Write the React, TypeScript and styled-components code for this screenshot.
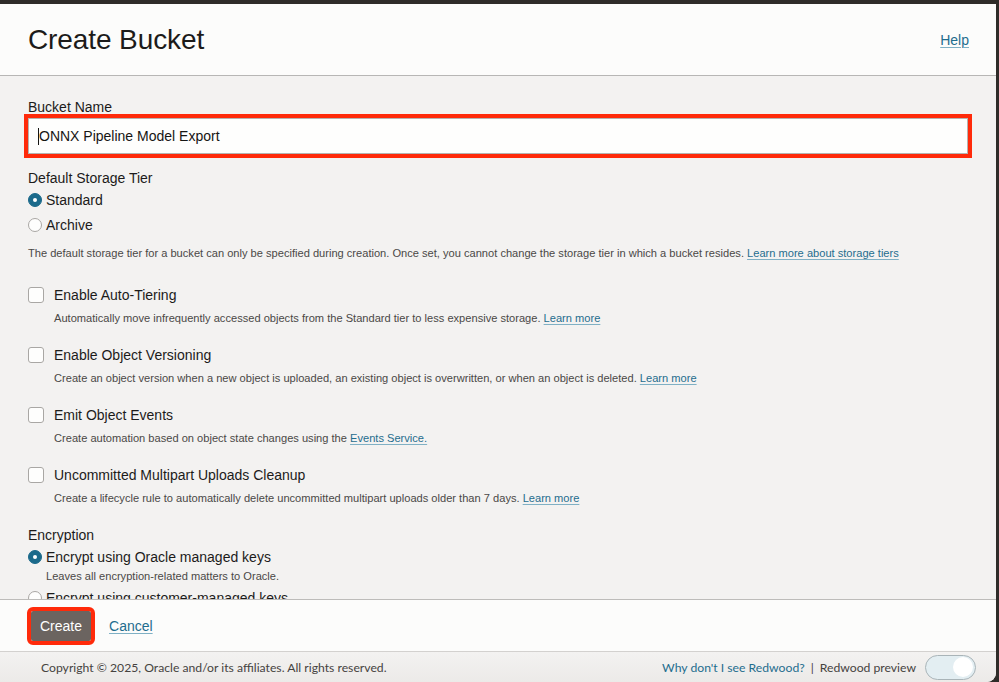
import React from "react";
import styled, { createGlobalStyle } from "styled-components";

const Global = createGlobalStyle`
  html, body { margin: 0; padding: 0; background: #2f2c29; }
  body { font-family: "Liberation Sans", Arial, Helvetica, sans-serif; color: #161513; }
  * { box-sizing: border-box; }
`;

const Screen = styled.div`
  width: 999px;
  height: 682px;
  background: #2f2c29;
  padding-top: 4px;
  overflow: hidden;
`;

const Panel = styled.div`
  width: 996px;
  height: 678px;
  display: flex;
  flex-direction: column;
  background: #f3f2f1;
  border-bottom-right-radius: 9px;
  overflow: hidden;
`;

const Header = styled.header`
  height: 72px;
  flex: none;
  background: #fcfcfb;
  border-bottom: 1px solid #b7b6b5;
  display: flex;
  align-items: center;
  justify-content: space-between;
  padding: 0 27px 0 28px;
`;

const Title = styled.h1`
  margin: 0;
  font-size: 28px;
  font-weight: 400;
  color: #1c1b1a;
  letter-spacing: -0.1px;
`;

const Link = styled.a<{ $size?: number }>`
  color: #1f6d8e;
  font-size: ${(p) => p.$size ?? 11.1}px;
  text-decoration: underline;
  text-decoration-color: #7fb0c4;
  text-underline-offset: 2px;
  text-decoration-thickness: 1px;
  cursor: pointer;
`;

const Body = styled.main`
  flex: 1;
  overflow: hidden;
  padding: 23px 28px 0 28px;
`;

const FieldLabel = styled.div<{ $mt?: number }>`
  font-size: 14px;
  line-height: 17px;
  color: #1c1b1a;
  margin-top: ${(p) => p.$mt ?? 0}px;
`;

const InputBox = styled.div`
  margin-top: 2px;
  height: 36px;
  background: #fefefd;
  border: 1px solid #b5b3b0;
  outline: 4px solid #ff2a0a;
  display: flex;
  align-items: center;
  padding-left: 9px;
  font-size: 14px;
  color: #161513;
`;

const Caret = styled.span`
  display: inline-block;
  width: 1px;
  height: 17px;
  background: #161513;
`;

const RadioRow = styled.label<{ $mt?: number }>`
  display: flex;
  align-items: center;
  gap: 4px;
  height: 17px;
  font-size: 14px;
  color: #1c1b1a;
  margin-top: ${(p) => p.$mt ?? 0}px;
`;

const RadioDot = styled.span<{ $on?: boolean }>`
  width: 14px;
  height: 14px;
  border-radius: 50%;
  flex: none;
  background: ${(p) => (p.$on ? "#1b6a8b" : "#fefefd")};
  border: 1px solid ${(p) => (p.$on ? "#1b6a8b" : "#a9a7a4")};
  display: flex;
  align-items: center;
  justify-content: center;
  &::after {
    content: "";
    display: ${(p) => (p.$on ? "block" : "none")};
    width: 4px;
    height: 4px;
    border-radius: 50%;
    background: #fff;
  }
`;

const Help = styled.p<{ $mt?: number; $ml?: number }>`
  margin: ${(p) => p.$mt ?? 0}px 0 0 ${(p) => p.$ml ?? 0}px;
  font-size: 11.1px;
  line-height: 14px;
  color: #4a4846;
`;

const CheckGroup = styled.div<{ $mt?: number }>`
  margin-top: ${(p) => p.$mt ?? 0}px;
`;

const CheckRow = styled.label`
  display: flex;
  align-items: center;
  gap: 10px;
  height: 17px;
  font-size: 14px;
  color: #1c1b1a;
`;

const CheckBox = styled.span`
  width: 16px;
  height: 16px;
  flex: none;
  border-radius: 3px;
  border: 1px solid #a9a7a4;
  background: #fefefd;
`;

const Footer = styled.div`
  height: 52px;
  flex: none;
  background: #fcfcfb;
  border-top: 1px solid #bdbcba;
  display: flex;
  align-items: center;
  gap: 18px;
  padding-left: 31px;
`;

const PrimaryButton = styled.button`
  height: 30px;
  padding: 0 9px;
  background: #6b6460;
  color: #ffffff;
  border: none;
  border-radius: 2px;
  font-family: inherit;
  font-size: 14px;
  outline: 4px solid #ff2a0a;
`;

const BottomBar = styled.footer`
  height: 31px;
  flex: none;
  background: linear-gradient(#f3f2f1, #eceae8);
  border-top: 1px solid #d3d1cf;
  display: flex;
  align-items: center;
  justify-content: space-between;
  padding: 0 20px 0 41px;
  font-family: Lato, "Noto Sans", sans-serif;
  font-size: 12.2px;
  color: #46433f;
`;

const BarRight = styled.div`
  display: flex;
  align-items: center;
  gap: 6px;
`;

const BarLink = styled.span`
  color: #1f6d8e;
`;

const Toggle = styled.span`
  position: relative;
  width: 51px;
  height: 25px;
  margin-left: 3px;
  border-radius: 13px;
  background: #e3eef2;
  border: 1px solid #a9b4b8;
  &::after {
    content: "";
    position: absolute;
    right: 2px;
    top: 1.5px;
    width: 20px;
    height: 20px;
    border-radius: 50%;
    background: #ffffff;
  }
`;

const checks = [
  {
    title: "Enable Auto-Tiering",
    desc: "Automatically move infrequently accessed objects from the Standard tier to less expensive storage. ",
    link: "Learn more",
  },
  {
    title: "Enable Object Versioning",
    desc: "Create an object version when a new object is uploaded, an existing object is overwritten, or when an object is deleted. ",
    link: "Learn more",
  },
  {
    title: "Emit Object Events",
    desc: "Create automation based on object state changes using the ",
    link: "Events Service.",
  },
  {
    title: "Uncommitted Multipart Uploads Cleanup",
    desc: "Create a lifecycle rule to automatically delete uncommitted multipart uploads older than 7 days. ",
    link: "Learn more",
  },
];

export default function App() {
  return (
    <>
      <Global />
      <Screen>
        <Panel>
          <Header>
            <Title>Create Bucket</Title>
            <Link $size={14}>Help</Link>
          </Header>
          <Body>
            <FieldLabel>Bucket Name</FieldLabel>
            <InputBox>
              <Caret />
              ONNX Pipeline Model Export
            </InputBox>
            <FieldLabel $mt={16}>Default Storage Tier</FieldLabel>
            <RadioRow $mt={4}>
              <RadioDot $on />
              Standard
            </RadioRow>
            <RadioRow $mt={8}>
              <RadioDot />
              Archive
            </RadioRow>
            <Help $mt={13}>
              The default storage tier for a bucket can only be specified during creation. Once set, you cannot change the storage tier in which a bucket resides.{" "}
              <Link>Learn more about storage tiers</Link>
            </Help>
            {checks.map((c, i) => (
              <CheckGroup key={c.title} $mt={i === 0 ? 26 : 21}>
                <CheckRow>
                  <CheckBox />
                  {c.title}
                </CheckRow>
                <Help $mt={8} $ml={26}>
                  {c.desc}
                  <Link>{c.link}</Link>
                </Help>
              </CheckGroup>
            ))}
            <FieldLabel $mt={22}>Encryption</FieldLabel>
            <RadioRow $mt={4}>
              <RadioDot $on />
              Encrypt using Oracle managed keys
            </RadioRow>
            <Help $mt={4} $ml={18}>
              Leaves all encryption-related matters to Oracle.
            </Help>
            <RadioRow $mt={6}>
              <RadioDot />
              Encrypt using customer-managed keys
            </RadioRow>
          </Body>
          <Footer>
            <PrimaryButton>Create</PrimaryButton>
            <Link $size={14}>Cancel</Link>
          </Footer>
          <BottomBar>
            <span>Copyright © 2025, Oracle and/or its affiliates. All rights reserved.</span>
            <BarRight>
              <BarLink>Why don't I see Redwood?</BarLink>
              <span>|</span>
              <span>Redwood preview</span>
              <Toggle />
            </BarRight>
          </BottomBar>
        </Panel>
      </Screen>
    </>
  );
}
